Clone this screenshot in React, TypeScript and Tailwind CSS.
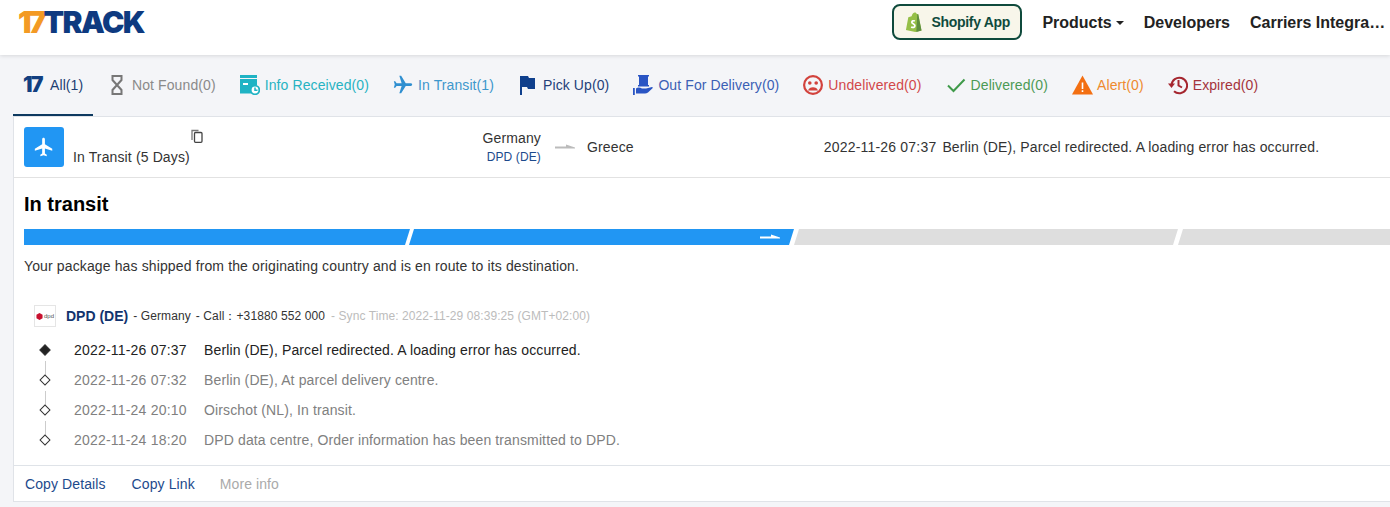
import React from 'react';

const PLANE =
   'M21 16v-2l-8-5V3.5c0-.83-.67-1.5-1.5-1.5S10 2.67 10 3.5V9l-8 5v2l8-2.5V19l-2 1.5V22l3.5-1 3.5 1v-1.5L13 19v-5.5l8 2.5z';

const Hourglass = () => (
   <svg viewBox="0 0 20 20" className="w-5 h-5" fill="none" stroke="#777" strokeWidth="2">
      <path d="M4.5 1h11M4.5 19h11M5.5 1v4L14.500 15v4M14.500 1V5L5.500 15v4" />
   </svg>
);

const InfoReceived = () => (
   <svg viewBox="0 0 20 20" className="w-5 h-5">
      <path fill="#1fb3c4" d="M0 0h17v3H0zM0 4h17v6.500a6 6 0 0 0-5.500 8H0z" />
      <rect x="3" y="8" width="5" height="2" fill="#fff" />
      <circle cx="15" cy="15" r="4.300" fill="#fff" stroke="#1fb3c4" strokeWidth="1.800" />
      <path d="M15 12.500V15.300h2.500" fill="none" stroke="#1fb3c4" strokeWidth="1.500" />
   </svg>
);

const Flag = () => (
   <svg viewBox="0 0 20 20" className="w-5 h-5">
      <path fill="#0f3f8c" d="M2 1h2v19H2zM4 1h6l1 2h6v11h-7l-1-2H4z" />
   </svg>
);

const OutForDelivery = () => (
   <svg viewBox="0 0 20 20" className="w-5 h-5">
      <path fill="#2a55c4" d="M5 0h11v1.500h-1V10h1v1.500H5V10h1V1.500H5z" />
      <path fill="#2a55c4" d="M0 13h1.800v7H0zM3 13.500c2-1.500 4-1 6 0h4l6-1.500c.8 0 1 .8.500 1.300L15 17.500c-1 .7-2 1-3 1H3z" />
   </svg>
);

const SadFace = () => (
   <svg viewBox="0 0 20 20" className="w-5 h-5">
      <circle cx="10" cy="10" r="8.900" fill="none" stroke="#d2423c" strokeWidth="2.200" />
      <circle cx="6.800" cy="8" r="1.800" fill="#d2423c" />
      <circle cx="13.200" cy="8" r="1.800" fill="#d2423c" />
      <path d="M5 15.500c1-4.500 9-4.500 10 0z" fill="#d2423c" />
   </svg>
);

const Check = () => (
   <svg viewBox="0 0 20 20" className="w-5 h-5" fill="none" stroke="#3f9a4a" strokeWidth="2">
      <path d="M2 10.500l5.500 5.500L18.500 4.500" />
   </svg>
);

const AlertTriangle = () => (
   <svg viewBox="0 0 21 20" className="w-[21px] h-5 -mr-px">
      <path fill="#f36f12" d="M10.500 0.500L21 19.500H0z" />
      <path fill="#fff" d="M9.700 7.500h1.600v6.500H9.700zM9.700 15.300h1.600v1.700H9.700z" />
   </svg>
);

const History = () => (
   <svg viewBox="0 0 20 20" className="w-5 h-5" fill="none" stroke="#a5262f" strokeWidth="2">
      <path d="M3.500 10a7.800 7.800 0 1 1 2.500 6.200" />
      <path d="M0 8.500h7L3.500 13z" fill="#a5262f" stroke="none" />
      <path d="M10.500 5v5.500l3.500 2" />
   </svg>
);

const ShopifyBag = () => (
   <svg viewBox="0 0 18 22" className="w-[17px] h-[21px]">
      <path fill="#95bf47" d="M1 19L3.500 5.500 7 4.500C7.500 2 9 .5 10.500.5c1 0 1.700.7 2 1.500l1.500.2L17.500 19.500 11 21z" />
      <path fill="#5e8e3e" d="M14 2.200l3.500 17.300-5.500 1.500L13 2.300z" />
      <path
         fill="none"
         stroke="#fff"
         strokeWidth="1.800"
         d="M10.500 9.500c-1.500-.8-3.300-.2-3.300 1.200 0 1.600 3.300 1.800 3.300 3.800 0 1.700-2 2.300-4 1.200"
      />
   </svg>
);

const tabs = [
   { label: 'Not Found(0)', color: 'text-[#8a8a8a]', icon: <Hourglass /> },
   { label: 'Info Received(0)', color: 'text-[#27b3c2]', icon: <InfoReceived /> },
   {
      label: 'In Transit(1)',
      color: 'text-[#3d97cc]',
      icon: (
         <svg viewBox="0 0 24 24" className="w-[22px] h-[22px] rotate-90 -mx-px">
            <path fill="#2f8fd0" d={PLANE} />
         </svg>
      ),
   },
   { label: 'Pick Up(0)', color: 'text-[#263f78]', icon: <Flag /> },
   { label: 'Out For Delivery(0)', color: 'text-[#3b5fb5]', icon: <OutForDelivery /> },
   { label: 'Undelivered(0)', color: 'text-[#d2484a]', icon: <SadFace /> },
   { label: 'Delivered(0)', color: 'text-[#4c9a55]', icon: <Check /> },
   { label: 'Alert(0)', color: 'text-[#ee8a2e]', icon: <AlertTriangle /> },
   { label: 'Expired(0)', color: 'text-[#a5333b]', icon: <History /> },
];

const events = [
   { time: '2022-11-26 07:37', text: 'Berlin (DE), Parcel redirected. A loading error has occurred.' },
   { time: '2022-11-26 07:32', text: 'Berlin (DE), At parcel delivery centre.' },
   { time: '2022-11-24 20:10', text: 'Oirschot (NL), In transit.' },
   { time: '2022-11-24 18:20', text: 'DPD data centre, Order information has been transmitted to DPD.' },
];

const SmallArrow = ({ color }: { color: string }) => (
   <svg viewBox="0 0 20 6" className="w-5 h-[6px]">
      <path fill={color} d="M0 2.500h11V.5l9 3v1H0z" />
   </svg>
);

const App: React.FC = () => {
   return (
      <div className="h-[507px] w-[1390px] overflow-hidden bg-[#f4f5f8] font-['Liberation_Sans',Arial,sans-serif] text-sm tracking-[0.13px] text-[#333]">
         <header className="relative z-10 flex h-[55px] items-start justify-between bg-white pl-[18px] pr-[1px] tracking-normal shadow-[0_1px_4px_rgba(0,0,0,0.12)]">
            <div className="mt-[6px] flex h-[32px] items-center font-['Inter',sans-serif] text-[30px] font-black leading-none tracking-[-1.500px]">
               <span className="tracking-[-3px] text-[#f39a24]">17</span>
               <span className="text-[#0e3a80]">TRACK</span>
            </div>
            <nav className="flex items-start text-base font-bold text-[#222]">
               <a className="mt-1 flex h-9 w-[130px] items-center gap-[9px] rounded-lg border-2 border-[#0f4a3c] bg-[#f8f6ea] pl-[11px] text-sm tracking-[-0.3px] text-[#0f4a3c]">
                  <ShopifyBag />
                  Shopify App
               </a>
               <a className="ml-5 flex h-[45px] items-center gap-1">
                  Products
                  <span className="mt-[1px] h-0 w-0 border-x-4 border-t-4 border-x-transparent border-t-[#222]" />
               </a>
               <a className="ml-5 flex h-[45px] items-center">Developers</a>
               <a className="ml-5 h-[45px] w-[139px] truncate leading-[45px]">Carriers Integrations</a>
            </nav>
         </header>

         <div className="flex h-[61px] items-stretch gap-[14px] pl-[13px] tracking-[0.1px]">
            <div className="flex w-[80px] flex-none items-center gap-[3px] border-b-2 border-[#0e3a60] pl-[10px] text-[#1d3f73]">
               <span className="w-6 font-['Inter',sans-serif] text-[21px] font-black leading-none tracking-[-1.500px] text-[#123f80]">
                  17
               </span>
               All(1)
            </div>
            <div className="flex items-center gap-6 pb-[2px]">
               {tabs.map((t) => (
                  <div key={t.label} className={`flex items-center gap-[5px] ${t.color}`}>
                     {t.icon}
                     {t.label}
                  </div>
               ))}
            </div>
         </div>

         <main className="ml-[13px] h-[386px] border-y border-l border-[#e0e3e8] bg-white">
            <div className="flex h-[61px] items-center border-b border-[#e2e2e2] pl-[10px]">
               <div className="flex h-10 w-10 items-center justify-center rounded-[3px] bg-[#2196f3]">
                  <svg viewBox="0 0 24 24" className="h-[22px] w-[22px]">
                     <path fill="#fff" d={PLANE} />
                  </svg>
               </div>
               <div className="ml-[9px] flex h-10 w-[131px] flex-col items-end justify-between">
                  <svg viewBox="0 0 14 14" className="mt-[2px] h-[14px] w-[14px]" fill="none" stroke="#444" strokeWidth="1.300">
                     <path d="M2 11V1.500h6.500" stroke="#777" />
                     <rect x="4.500" y="3.500" width="7.500" height="9.800" rx="1" />
                  </svg>
                  <span className="w-full leading-5">In Transit (5 Days)</span>
               </div>
               <div className="ml-[212px] flex w-[125px] flex-col items-end pt-[1px]">
                  <span className="leading-[19px]">Germany</span>
                  <span className="text-xs leading-[18px] text-[#1d4a8c]">DPD (DE)</span>
               </div>
               <div className="ml-[14px] w-5">
                  <SmallArrow color="#bbb" />
               </div>
               <span className="ml-3">Greece</span>
               <span className="ml-[190px] tracking-[0.2px]">2022-11-26 07:37</span>
               <span className="ml-[6px]">{events[0].text}</span>
            </div>

            <div className="pl-[10px] pt-4">
               <h2 className="text-xl font-bold leading-[20px] tracking-normal text-black">In transit</h2>
               <div className="mt-[15px] flex h-4 overflow-hidden">
                  <div className="w-[386px] flex-none bg-[#2196f3] [clip-path:polygon(0_0,100%_0,calc(100%-5px)_100%,0_100%)]" />
                  <div className="-ml-[1px] flex w-[385px] flex-none items-center justify-end bg-[#2196f3] pr-[14px] [clip-path:polygon(5px_0,100%_0,calc(100%-5px)_100%,0_100%)]">
                     <SmallArrow color="#fff" />
                  </div>
                  <div className="w-[384px] flex-none bg-[#dedede] [clip-path:polygon(5px_0,100%_0,calc(100%-5px)_100%,0_100%)]" />
                  <div className="w-[300px] flex-none bg-[#dedede] [clip-path:polygon(5px_0,100%_0,100%_100%,0_100%)]" />
               </div>
               <p className="mt-[12px] leading-[18px]">
                  Your package has shipped from the originating country and is en route to its destination.
               </p>
            </div>

            <div className="mt-[30px] flex h-[22px] items-center pl-[20px] text-xs tracking-[0.1px]">
               <div className="flex h-[22px] w-[22px] items-center justify-center gap-px border border-[#e5e5e5]">
                  <svg viewBox="0 0 8 8" className="h-[7px] w-[7px]">
                     <path fill="#c8102e" d="M4 0l3.500 2v4L4 8 .5 6V2z" />
                  </svg>
                  <span className="text-[6px] leading-none tracking-normal text-[#555]">dpd</span>
               </div>
               <span className="ml-[10px] text-sm font-bold tracking-normal text-[#12336e]">DPD (DE)</span>
               <span className="ml-[5px]">- Germany</span>
               <span className="ml-[5px]">- Call：+31880 552 000</span>
               <span className="ml-[6px] tracking-[0.08px] text-[#bcbcbc]">- Sync Time: 2022-11-29 08:39:25 (GMT+02:00)</span>
            </div>

            <ul className="mt-2">
               {events.map((e, i) => (
                  <li key={e.time} className={`flex h-[30px] items-center pl-[25px] ${i === 0 ? 'text-[#222]' : 'text-[#808080]'}`}>
                     <div className="relative flex w-[12px] justify-center">
                        <span
                           className={`h-[8px] w-[8px] rotate-45 border border-[#333] ${i === 0 ? 'bg-[#222]' : 'bg-white'}`}
                        />
                        {i < 3 && <span className="absolute left-[5.500px] top-[15px] h-[14px] w-px bg-[#ccc]" />}
                     </div>
                     <span className="ml-[23px] w-[130px] tracking-[0.2px]">{e.time}</span>
                     <span>{e.text}</span>
                  </li>
               ))}
            </ul>

            <div className="mt-[10px] flex h-[37px] items-center border-t border-[#dfe3e8] pl-[11px] tracking-[0.1px] text-[#1d4a8c]">
               <a>Copy Details</a>
               <a className="ml-[26px]">Copy Link</a>
               <a className="ml-[25px] text-[#aaa]">More info</a>
            </div>
         </main>
      </div>
   );
};

export default App;
